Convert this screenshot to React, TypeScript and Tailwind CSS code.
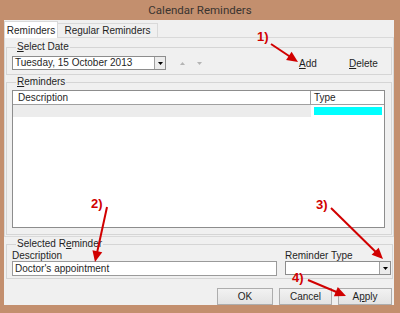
import React from 'react';

const RED = '#d10000';

// red annotation arrow, head computed from the line direction
const Arrow: React.FC<{ x1: number; y1: number; x2: number; y2: number }> = ({ x1, y1, x2, y2 }) => {
    const len = Math.hypot(x2 - x1, y2 - y1);
    const dx = (x2 - x1) / len;
    const dy = (y2 - y1) / len;
    const bx = x2 - dx * 11;
    const by = y2 - dy * 11;
    const pts = `${x2},${y2} ${bx - dy * 5},${by + dx * 5} ${bx + dy * 5},${by - dx * 5}`;
    return (
        <g>
            <line x1={x1} y1={y1} x2={bx + dx * 2} y2={by + dy * 2} stroke={RED} strokeWidth={2} />
            <polygon points={pts} fill={RED} />
        </g>
    );
};

const DropButton: React.FC = () => (
    <div className="w-[11px] h-full border-l border-[#a0a0a0] bg-[#ececec] flex items-center justify-center">
        <svg width="5" height="3" viewBox="0 0 5 3">
            <polygon points="0,0 5,0 2.5,3" fill="#000" />
        </svg>
    </div>
);

const CalendarReminders: React.FC = () => {
    return (
        <div className="w-[400px] h-[313px] bg-[#c38f6e] flex flex-col relative overflow-hidden font-['Liberation_Sans',Arial,sans-serif] text-[10px] text-[#1f1f1f]">
            <div className="h-[20px] flex items-center justify-center font-['Roboto',sans-serif] text-[11.5px] text-[#3a3430] pt-[1px]">
                Calendar Reminders
            </div>

            <div className="ml-[4px] mr-[6px] h-[285px] bg-[#f0f0f0] flex flex-col">
                {/* tabs */}
                <div className="h-[17px] flex items-end">
                    <div className="h-[17px] w-[54px] bg-white border border-b-0 border-[#d9d9d9] flex items-center justify-center relative z-10 -mb-[1px]">
                        Reminders
                    </div>
                    <div className="h-[14px] w-[100px] border border-l-0 border-b-0 border-[#d9d9d9] flex items-center justify-center">
                        Regular Reminders
                    </div>
                </div>

                {/* tab page */}
                <div className="h-[200px] border border-[#d9d9d9] px-[1px] pt-[2px] flex flex-col">
                    <fieldset className="h-[35px] border border-[#d5d5d5] pl-[5px] pr-[6px]">
                        <legend className="ml-[4px] px-[1px] leading-[14px]">
                            <u>S</u>elect Date
                        </legend>
                        <div className="mt-[2px] h-[14px] flex items-center">
                            <div className="w-[154px] h-[14px] bg-white border border-[#8d8d8d] flex">
                                <div className="flex-1 pl-[2px] leading-[12px]">Tuesday, 15 October 2013</div>
                                <DropButton />
                            </div>
                            <svg width="5" height="3" viewBox="0 0 5 3" className="ml-[14px] mt-[1px]">
                                <polygon points="2.5,0 5,3 0,3" fill="#b4b4b4" />
                            </svg>
                            <svg width="5" height="3" viewBox="0 0 5 3" className="ml-[12px] mt-[1px]">
                                <polygon points="0,0 5,0 2.5,3" fill="#b4b4b4" />
                            </svg>
                            <span className="ml-[97px] w-[50px]">
                                <u>A</u>dd
                            </span>
                            <span>
                                <u>D</u>elete
                            </span>
                        </div>
                    </fieldset>

                    <fieldset className="h-[160px] border border-[#d5d5d5] pl-[5px] pr-[6px]">
                        <legend className="ml-[4px] px-[1px] leading-[14px]">
                            <u>R</u>eminders
                        </legend>
                        <div className="mt-[1px] w-[373px] h-[138px] bg-white border border-[#8d8d8d] flex flex-col">
                            <div className="h-[14px] flex border-b border-[#a0a0a0]">
                                <div className="w-[298px] border-r border-[#a0a0a0] pl-[5px] leading-[13px]">Description</div>
                                <div className="flex-1 pl-[3px] leading-[13px]">Type</div>
                            </div>
                            <div className="h-[12px] flex">
                                <div className="w-[298px] bg-[#ececec]" />
                                <div className="flex-1 px-[2px] py-[2px] pl-[3px]">
                                    <div className="h-[8px] bg-[#00ffff]" />
                                </div>
                            </div>
                        </div>
                    </fieldset>
                </div>

                {/* selected reminder */}
                <fieldset className="ml-[2px] mr-[1px] h-[42px] border border-[#d5d5d5] pl-[5px] pr-[1px] pb-[2px]">
                    <legend className="ml-[4px] px-[1px] leading-[14px]">
                        Selected R<u>e</u>minder
                    </legend>
                    <div className="flex">
                        <div className="w-[265px] flex flex-col">
                            <div className="h-[10px] leading-[9px]">Description</div>
                            <div className="h-[15px] bg-white border border-[#9a9a9a] pl-[2px] leading-[13px]">
                                Doctor&apos;s appointment
                            </div>
                        </div>
                        <div className="ml-[8px] w-[106px] flex flex-col">
                            <div className="h-[10px] leading-[9px]">Reminder Type</div>
                            <div className="h-[14px] bg-white border border-[#8d8d8d] flex justify-end">
                                <DropButton />
                            </div>
                        </div>
                    </div>
                </fieldset>

                {/* buttons */}
                <div className="mt-[9px] h-[17px] flex justify-end gap-[6px] pr-[2px]">
                    <div className="w-[56px] border border-[#adadad] bg-gradient-to-b from-[#f2f2f2] to-[#e3e3e3] flex items-center justify-center">
                        OK
                    </div>
                    <div className="w-[53px] border border-[#adadad] bg-gradient-to-b from-[#f2f2f2] to-[#e3e3e3] flex items-center justify-center">
                        Cancel
                    </div>
                    <div className="w-[54px] border border-[#adadad] bg-gradient-to-b from-[#f2f2f2] to-[#e3e3e3] flex items-center justify-center">
                        A<u>p</u>ply
                    </div>
                </div>
            </div>

            {/* annotations */}
            <svg className="absolute inset-0 pointer-events-none" width="400" height="313">
                <Arrow x1={271} y1={44} x2={298} y2={62} />
                <Arrow x1={107} y1={207} x2={95} y2={262} />
                <Arrow x1={331} y1={208} x2={383} y2={259} />
                <Arrow x1={308} y1={280} x2={346} y2={296} />
            </svg>
            <span className="absolute left-[257px] top-[30px] text-[13px] font-bold leading-[13px] text-[#d10000]">1)</span>
            <span className="absolute left-[91px] top-[197px] text-[13px] font-bold leading-[13px] text-[#d10000]">2)</span>
            <span className="absolute left-[316px] top-[198px] text-[13px] font-bold leading-[13px] text-[#d10000]">3)</span>
            <span className="absolute left-[292px] top-[271px] text-[13px] font-bold leading-[13px] text-[#d10000]">4)</span>
        </div>
    );
};

export default CalendarReminders;
